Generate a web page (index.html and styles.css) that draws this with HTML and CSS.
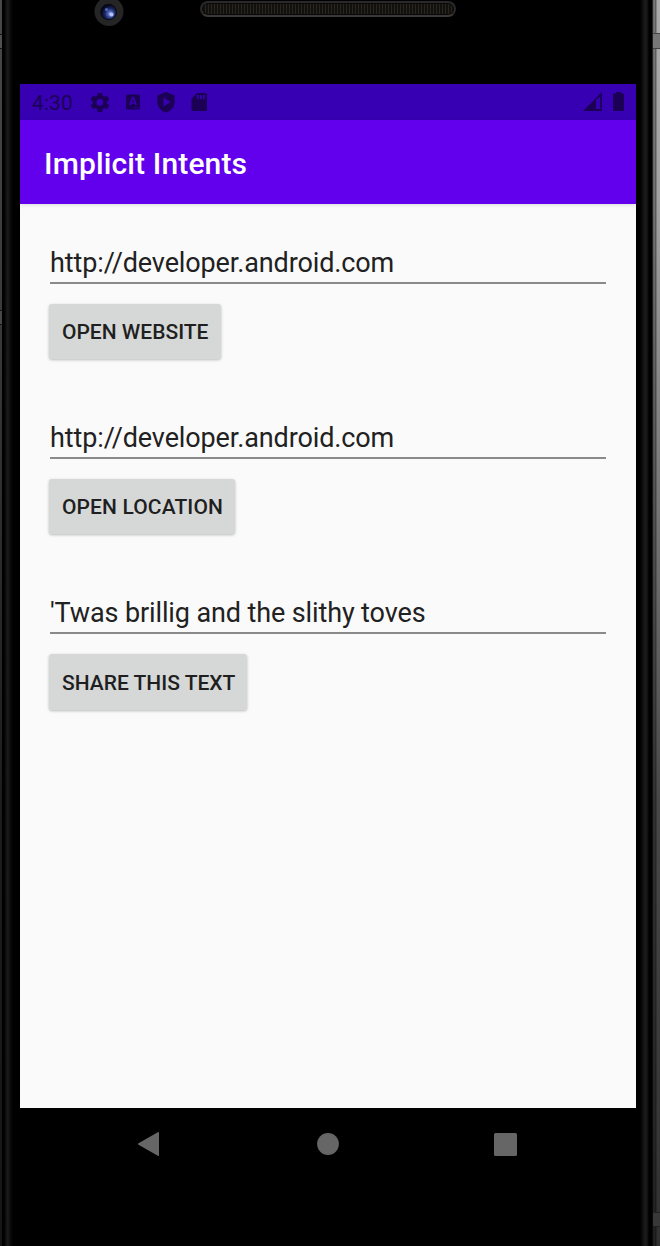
FILE: index.html
```html
<!DOCTYPE html>
<html lang="en">
<head>
<meta charset="utf-8">
<title>Implicit Intents</title>
<link rel="stylesheet" href="styles.css">
</head>
<body>
<div class="device">
  <div class="edge edge-left"><i class="seam seam-a"></i><i class="seam seam-b"></i></div>
  <div class="face">
    <header class="top-bezel">
      <svg class="camera" width="30" height="27" viewBox="0 0 30 27">
        <defs>
          <radialGradient id="lens" cx=".62" cy=".62" r=".6">
            <stop offset="0" stop-color="#a5b8ff"/><stop offset=".25" stop-color="#5268b8"/><stop offset=".6" stop-color="#1b2762"/><stop offset="1" stop-color="#05081c"/>
          </radialGradient>
        </defs>
        <circle cx="15" cy="11.500" r="14.500" fill="#252525"/>
        <circle cx="14.500" cy="12" r="8.300" fill="#090a12"/>
        <circle cx="14.500" cy="12" r="7.300" fill="url(#lens)"/>
        <circle cx="12.500" cy="9.500" r="1.600" fill="#5365b5"/>
        <circle cx="17.500" cy="14.500" r="2" fill="#b3c2fb"/>
      </svg>
      <div class="speaker"></div>
    </header>
    <main class="screen">
      <div class="status-bar">
        <span class="clock">4:30</span>
        <svg class="status-icons" width="120" height="20" viewBox="0 0 120 20" fill="#1b0055">
          <path transform="translate(-1.500 -2)  scale(.95)" d="M19.430 12.980c.04-.32.07-.64.07-.98s-.03-.66-.07-.98l2.110-1.650c.19-.15.24-.42.12-.64l-2-3.460c-.12-.22-.39-.3-.61-.22l-2.490 1c-.52-.4-1.080-.73-1.690-.98l-.38-2.650C14.460 2.180 14.250 2 14 2h-4c-.25 0-.46.180-.49.420l-.38 2.650c-.61.250-1.170.590-1.690.980l-2.490-1c-.23-.09-.49 0-.61.220l-2 3.460c-.13.220-.07.490.12.640l2.110 1.650c-.04.320-.07.650-.07.980s.03.660.07.980l-2.110 1.650c-.19.150-.24.420-.12.640l2 3.460c.12.220.39.300.61.220l2.490-1c.52.400 1.080.730 1.690.980l.38 2.650c.03.240.24.420.49.420h4c.25 0 .46-.18.49-.42l.38-2.650c.61-.25 1.170-.59 1.690-.98l2.490 1c.23.090.49 0 .61-.22l2-3.460c.12-.22.070-.49-.12-.64zM12 15.500a3.500 3.500 0 1 1 0-7 3.500 3.500 0 0 1 0 7z"/>
          <path fill-rule="evenodd" d="M37.500 1.500h11q1.500 0 1.500 1.500v12q0 1.500-1.500 1.500h-11Q36 16.500 36 15V3Q36 1.500 37.500 1.500z"/>
          <path d="M39.700 12.300L42.700 4.700h.6l3 7.600M41 10h4" fill="none" stroke="#3700b3" stroke-width="1.700"/>
          <path d="M43.500 14.800h5" stroke="#3700b3" stroke-width=".8"/>
          <path fill-rule="evenodd" d="M76 -1l8.700 3.400v6.500q0 7.500-8.700 10.600-8.700-3.100-8.700-10.600v-6.500zM73.500 4.500v9l7-4.500z"/>
          <path fill-rule="evenodd" d="M107 0h8.500q1.500 0 1.500 1.500v15q0 1.500-1.500 1.500h-12.500q-1.500 0-1.500-1.500V5.500zM107 2v4h1.800V2zM110 2v4h1.800V2zM113 2v4h1.800V2z"/>
        </svg>
        <svg class="phone-icons" width="42" height="20" viewBox="0 0 42 20">
          <path fill="#1b0055" fill-rule="evenodd" d="M0 18L19 -1v19zM13 7v9h4.200V3.600z"/>
          <path fill="#1b0055" d="M33-1h5v1.500h2q1 0 1 1V17q0 1-1 1h-9q-1 0-1-1V1.500q0-1 1-1h2z"/>
        </svg>
      </div>
      <div class="app-bar">Implicit Intents</div>
      <div class="content">
        <section class="group"><div class="field">http://developer.android.com</div><button class="button website">OPEN WEBSITE</button></section>
        <section class="group"><div class="field">http://developer.android.com</div><button class="button location">OPEN LOCATION</button></section>
        <section class="group"><div class="field">'Twas brillig and the slithy toves</div><button class="button share">SHARE THIS TEXT</button></section>
      </div>
    </main>
    <nav class="nav-bar">
      <svg width="22" height="26" viewBox="0 0 22 26"><path d="M.5 12.200L19.800 1.300q1.200-.6 1.200.7v22q0 1.300-1.200.7L.5 13.800q-1.200-.8 0-1.600z" fill="#666"/></svg>
      <svg width="24" height="22" viewBox="0 0 24 22"><circle cx="13" cy="11" r="10.900" fill="#666"/></svg>
      <svg width="23" height="23" viewBox="0 0 23 23"><rect width="23" height="23" rx="1.500" fill="#666"/></svg>
    </nav>
  </div>
  <div class="edge edge-right"><i class="seam seam-c"></i><i class="seam seam-d"></i></div>
</div>
</body>
</html>
```

FILE: styles.css
```css
* { box-sizing: border-box; }
body { margin: 0; background: #000; font-family: Roboto, "Liberation Sans", sans-serif; }
.device { display: grid; grid-template-columns: 20px 616px 24px; width: 660px; height: 1246px; overflow: hidden; }
.edge { position: relative; }
.edge-left {
  background:
    linear-gradient(90deg, transparent 2px, #000 2px, #000 4px, #181818 7px, #1b1b1b 8px, #0c0c0c 10px, #000 13px),
    linear-gradient(#484848, #3b3b3b 300px, #1d1d1d 800px, #161616);
}
.edge-right {
  background:
    linear-gradient(90deg, #000 4px, #0a0a0a 6px, #1c1c1c 9px, #161616 11px, #000 13px, #000 16px, rgba(0,0,0,.6) 17px, rgba(0,0,0,.15) 18px, rgba(0,0,0,.45) 19px, rgba(0,0,0,.45) 20px, transparent 21px),
    linear-gradient(#aaa, #a2a2a2 200px, #777 500px, #484848 800px, #303030 1246px);
}
.seam { position: absolute; height: 15px; border: solid #111; border-width: 1px 0; background: rgba(100,100,100,.35); }
.seam-a, .seam-b { left: 0; width: 2px; }
.seam-a { top: 34px; }
.seam-b { top: 310px; }
.seam-c, .seam-d { right: 0; width: 7px; }
.seam-c { top: 33px; height: 16px; border-color: #444; background: #777; }
.seam-d { top: 1212px; border-color: #222; background: #383838; }
.face { display: flex; flex-direction: column; }
.top-bezel { display: flex; align-items: flex-start; height: 84px; padding-left: 74px; }
.camera { display: block; }
.speaker {
  width: 256px; height: 16px; margin: 1px 0 0 76px; border: 2px solid #2a282a; border-bottom-color: #3a3838; border-radius: 8px;
  background: repeating-linear-gradient(90deg, #29261f 0 1px, #12110e 1px 3px); box-shadow: inset 0 0 0 1px #0a0a0a;
}
.screen { height: 1024px; display: flex; flex-direction: column; background: #fafafa; }
.status-bar { display: flex; height: 36px; padding: 9px 11px 0 12px; background: #3700b3; color: #1b0055; }
.clock { width: 58px; font-size: 21px; line-height: 21px; letter-spacing: .1px; }
.status-icons, .phone-icons { display: block; overflow: visible; }
.phone-icons { margin-left: auto; }
.app-bar { height: 84px; padding: 2px 24px 0; background: #6200ee; color: #fff; font-size: 30px; font-weight: 500; line-height: 83px; letter-spacing: .14px; box-shadow: 0 1px 4px rgba(0,0,0,.12); }
.content { display: flex; flex-direction: column; padding: 36px 30px 0; }
.group { display: flex; flex-direction: column; align-items: flex-start; height: 175.200px; }
.field { width: 556px; height: 44px; padding-top: 2px; border-bottom: 2px solid #8a8a8a; color: #212121; font-size: 27px; line-height: 43px; letter-spacing: -.12px; white-space: nowrap; }
.button { margin: 20px 0 0 -1px; padding: 1px 0 0 13px; height: 55px; border: 0; border-radius: 3px; background: #d6d8d7; color: #1f1f1f; text-align: left; font-family: inherit; font-size: 21px; font-weight: 500; line-height: 55px; white-space: nowrap; box-shadow: 0 1px 3px rgba(0,0,0,.26); }
.website { width: 172px; }
.location { width: 186px; letter-spacing: .12px; }
.share { width: 198px; height: 56px; padding-top: 2px; }
.nav-bar { display: flex; align-items: center; justify-content: space-between; height: 72px; padding: 0 119px 0 118px; }
```
